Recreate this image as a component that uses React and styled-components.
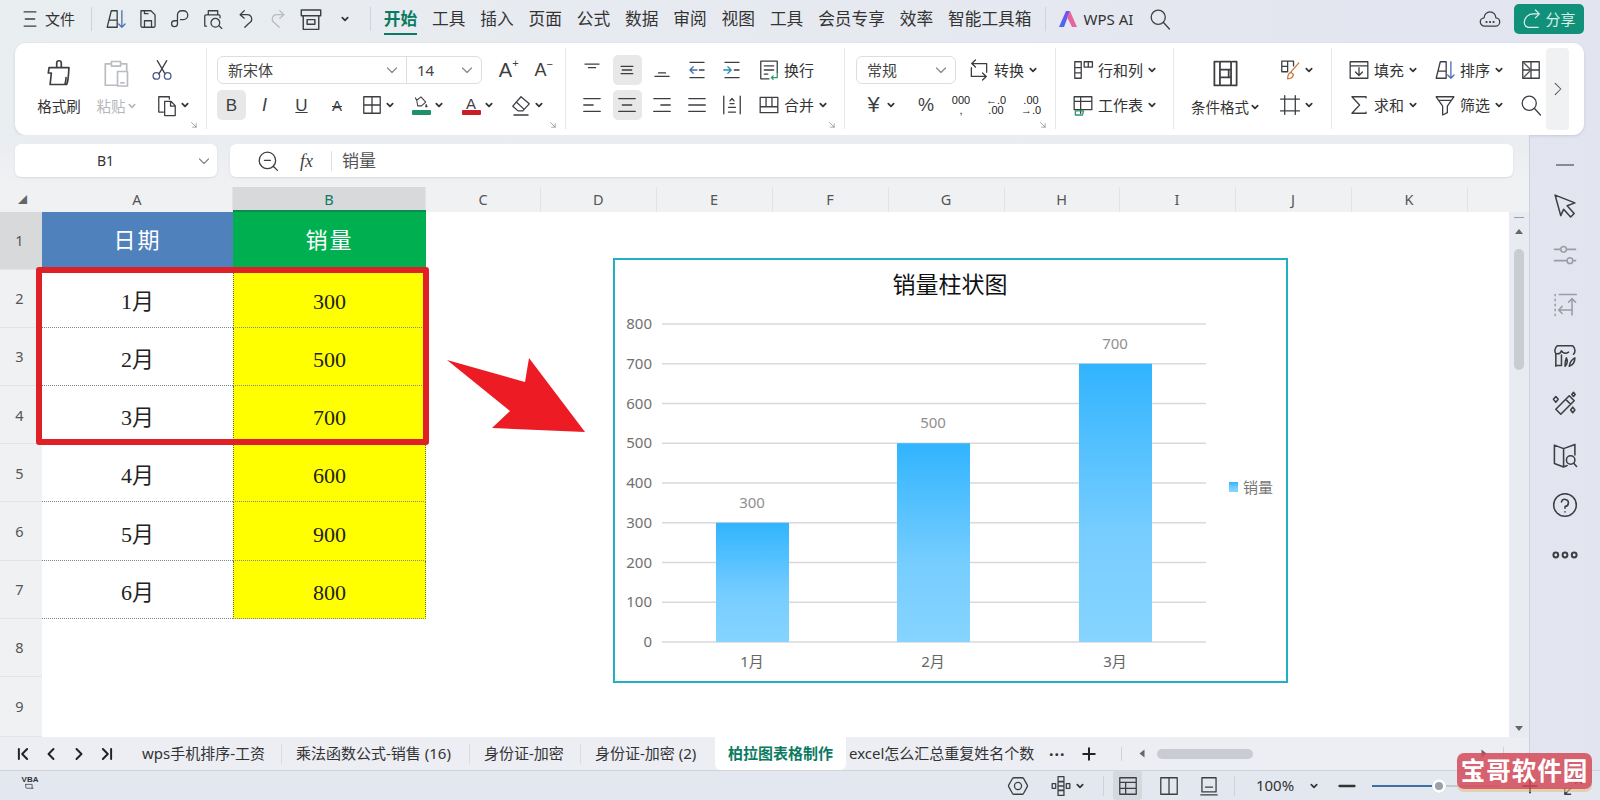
import React from 'react';
import styled, { createGlobalStyle } from 'styled-components';

const UI = '"Noto Sans", "Noto Sans CJK SC", sans-serif';
const SERIF = '"Liberation Serif", "Noto Sans CJK SC", serif';

const Global = createGlobalStyle`
	html, body { margin: 0; padding: 0; background: #e6e9f0; }
	body { font-family: ${UI}; color: #333; }
	* { box-sizing: border-box; }
`;

// icon drawings, all on a 20x20 box
const P = ({ d, c, w }) => <path d={d} stroke={c} strokeWidth={w} />;
const icons = {
	menu: <P d="M5 4h10M6 10h8M5 16h10" />,
	sort: <><P d="M2.5 17 6 3h5v14H2.5ZM4.2 11H11" /><P d="M15 3v14M12.3 14.3 15 17l2.7-2.7" c="#4a6fb0" /></>,
	save: <P d="M4 3h8.5L16 6.5V16a1 1 0 0 1-1 1H5a1 1 0 0 1-1-1ZM7 17v-5.5h6V17M7 3v2.5h3" />,
	link: <P d="M9.5 10.5H12a3.7 3.7 0 0 0 0-7.5h-1.5a3.5 3.5 0 0 0-3.5 3.5V14a2.5 2.5 0 1 1-2.5-2.5H7" />,
	preview: <P d="M6 6.5V3h8v3.5M4.5 16H3V7.5a1 1 0 0 1 1-1h11a1 1 0 0 1 1 1V9M12 9.5a3.7 3.7 0 1 0 0 7.4 3.7 3.7 0 0 0 0-7.4ZM14.8 15.6l2.7 2.4" />,
	undo: <P d="M8.5 3 5 6.3l3.5 3M5 6.3h6a3.8 3.8 0 0 1 1.5 7.3L9 17" />,
	redo: <P d="M11.5 3 15 6.3l-3.5 3M15 6.3H9a3.8 3.8 0 0 0-1.5 7.3L11 17" />,
	box: <P d="M2.5 3h15v4.5h-15ZM4 7.5V18h12V7.5M7 10.5h6v3.5H7Z" />,
	brush: <P d="M8.5 6.5V3.5a1.5 1.5 0 0 1 3 0v3M4 6.5h12M3.5 6.5 3 10h2l-.8 7.5H15c.8-1 1.2-5 1.5-11M14 17c.3-1.5.6-2.5.6-4" />,
	paste: <P d="M6 4H3v14h7M14 4h3v5M7 2.5h6V5.5H7ZM11 9h6.5v9.5H11ZM13.2 16.5h2" />,
	scissors: <><path d="M7.3 13.5 14 2M12.7 13.5 6 2" /><circle cx="5.2" cy="15" r="2.8" stroke="#4c5a8c" /><circle cx="14.8" cy="15" r="2.8" stroke="#4c5a8c" /></>,
	copy: <P d="M12 5V3H3v13h4M8 7h5.5L17 10.5V19H8ZM13 7v4h4" />,
	borders: <P d="M3 3h14v14H3ZM10 3v14M3 10h14" />,
	bucket: <P d="M5.5 6 10 2.5l5 5.5-4.500 4H6.500ZM5.500 6 4 3.500M15.500 10.500l1 2.500-1.500 0Z" />,
	eraser: <P d="M3 11 10 3l7 6-5.5 6H7.5ZM6 7.5l6.5 6M4 18.5h12" />,
	launcher: <P d="M4 4l8 8M12 6v6H6" />,
	alignTop: <P d="M4 5h12M7 8h6" />,
	alignMid: <P d="M5 7h10M6 10h8M5 13h10" />,
	alignBot: <P d="M7 12.5h6M4 15.5h12" />,
	outdent: <><P d="M4 3.5h12M4 16.5h12M12 10h4" /><P d="M10 10H4M6.8 7.2 4 10l2.8 2.8" c="#4a6fb0" /></>,
	indent: <><P d="M4 3.5h12M4 16.5h12M12 10h4" /><P d="M3 10h6M6.5 7.2 9.3 10l-2.8 2.8" c="#2a8fb0" /></>,
	wrap: <><P d="M10 17.5H3v-15h14v10M6 6.5h8M6 10h8M6 13.5h3" /><P d="M17 13v3.5h-5M13.5 15l-1.5 1.5 1.5 1.5" c="#2a9a6a" /></>,
	alignL: <P d="M3 4.5h14M3 10h8M3 15.5h14" />,
	alignC: <P d="M3 4.5h14M6 10h8M3 15.5h14" />,
	alignR: <P d="M3 4.5h14M9 10h8M3 15.5h14" />,
	justify: <P d="M3 4.5h14M3 10h14M3 15.5h14" />,
	distrib: <P d="M3 2.5v15M17 2.5v15M7 16h6M7 12h6M8.3 6.5 10 4.5l1.700 2M8.3 8.8h3.4" />,
	merge: <P d="M2.5 3.5h15v13h-15ZM2.5 11.5h15M7.5 3.5v8M12.5 3.5v8" />,
	convert: <P d="M7 1.5 3.8 4.5 7 7.5M3.8 4.5H16.5V12M13 18.5l3.2-3-3.2-3M16.2 15.5H3.5V8" />,
	rowcol: <P d="M3 3h5.5v14H3ZM3 8h5.5M3 12.5h5.5M11 3h7v4.5h-7ZM14.5 3v4.5" />,
	sheet: <><P d="M2.5 3h15v11h-15ZM2.5 7h15M8 3v14" /><P d="M3.5 15h7l-1 3.5h-6Z" c="#2a9a6a" /></>,
	cond: <P d="M5.5 2.5H3v15h2.5M14.5 2.500H17v15h-2.5M6.500 2.500h7v15h-7ZM6.500 7.500h5.500v5H6.500ZM12 7.500h1.500M6.500 12.500h7" />,
	fmtbrush: <><P d="M3 2.5h10v4M3 2.5v9h4.5M8 2.5v9M3 7h5" /><P d="M17.5 4 10.5 12M8 17.5c0-3 1-5 3-5.500l2 2c-.5 2-2.500 3.500-5 3.500Z" c="#c8783c" /></>,
	freeze: <P d="M2 5h16M2 15h16M5.5 2v16M14.5 2v16" />,
	fill: <P d="M2.5 3h15v14h-15ZM2.5 6.5h15M10 8v6.5M7 11.7l3 3 3-3" />,
	sum: <P d="M16 4V3H4l6.5 7L4 17h12v-1" />,
	filter: <P d="M2.5 3h15l-5.5 8v5.5l-4 2V11ZM5 6h10" />,
	split: <><P d="M3 3h14M3 17h14M17 3v14M3 3v14M3 10h14M10 3v14" /><P d="M3 3l7 7-7 7" c="#555" /></>,
	search: <P d="M8.5 2.5a6 6 0 1 0 0 12 6 6 0 0 0 0-12ZM13 13l5 5.5" />,
	zoomFx: <P d="M9.5 2.5a7 7 0 1 0 0 14 7 7 0 0 0 0-14ZM7 9.5h5M14.5 14.5l3.5 3.5" />,
	cloud: <><P d="M5.5 16a3.5 3.5 0 0 1-.5-7 5 5 0 0 1 10 0 3.5 3.5 0 0 1-.5 7Z" /><P d="M7 12.5h.1M10 12.5h.1M13 12.5h.1" w="1.8" /></>,
	share: <P d="M13.5 1.500 17 5l-3.5 3.5M17 5h-5a8 8 0 0 0-8.500 7.500c0 3 1.500 4 3.500 4.500h9" />,
	cursor: <P d="M3 3l14 5.5-5.500 2 5 5.500-2.500 2.500-5-5.500L7 17.500Z" />,
	sliders: <P d="M2.5 6h4.5M11 6h6.500M7 6a2 2 0 1 0 4 0 2 2 0 0 0-4 0ZM2.500 14h9M15.500 14h2M11.500 14a2 2 0 1 0 4 0 2 2 0 0 0-4 0Z" />,
	arrange: <P d="M3 2.5v1M3 6v1M3 9.5v1M3 13v1M3 16.5v1M6 2.5h12M15 17V6M12.5 8 15 5.5 17.5 8M15 13.5H6M8 11 5.5 13.5 8 16" />,
	leaf: <P d="M3.5 18V9C2.5 8 2.5 5 4.5 3.5h11c2 1.5 2 5 .5 6M7.5 10v7.5H3.5M3.5 9c2 .5 3.5-.5 4-2 .5 1.500 3 2.500 5 1M10 18c0-3 .5-5 1-6 1 2 1 4-1 6ZM13 18c.5-3 2-5 4-6 0 3-1 5-4 6Z" />,
	wand: <P d="M3.5 13 13 3.5l3.5 3.5L7 16.5ZM10.5 6l3.5 3.5M3.5 4l1.700 2-1.700 2-1.700-2ZM15.500 11.500l1.500 2-1.500 2-1.500-2ZM16 1l1.200 1.500L16 4l-1.200-1.500Z" />,
	guide: <P d="M9 18.5 2.5 16V3L9 5.5 17 2.5V10M9 5.5v13M9 18.5l2.500-1M14 10.500a3 3 0 1 0 0 6 3 3 0 0 0 0-6ZM16.200 15.800l2 2.300" />,
	help: <P d="M10 2a8 8 0 1 0 0 16 8 8 0 0 0 0-16ZM7.5 7.8A2.5 2.5 0 1 1 10 11v1.300M10 14.800v.2" />,
	dots: <><circle cx="3.5" cy="10" r="1.7" /><circle cx="10" cy="10" r="1.7" /><circle cx="16.5" cy="10" r="1.7" /></>,
	dash: <P d="M2 10h16" />,
	first: <P d="M5 4v12M15 4 9 10l6 6" />,
	prev: <P d="M13 4 7 10l6 6" />,
	next: <P d="M7 4l6 6-6 6" />,
	last: <P d="M15 4v12M5 4l6 6-6 6" />,
	plus: <P d="M10 3v14M3 10h14" />,
	vba: <P d="M4 2v4c0 1 .7 1.500 1.500 1.500h9M4 2h9v5.500" />,
	eye: <><P d="M6.5 3h7c.6 0 1 .3 1.300.8l3 5.200c.3.5.3 1.200 0 1.700l-3 5.500c-.3.5-.7.8-1.300.8h-7c-.6 0-1-.3-1.300-.8l-3-5.500c-.3-.5-.3-1.200 0-1.700l3-5.200c.3-.5.7-.8 1.300-.8Z" /><circle cx="10" cy="10" r="3" /></>,
	pivot: <P d="M7.5 2h5v4h-5ZM7.5 14h5v4h-5ZM7.5 6.5h5v7h-5ZM2.5 8h3v4h-3ZM14.5 8h3v4h-3ZM7.5 10h5" />,
	viewNormal: <P d="M3 3h14v14H3ZM3 7h14M8 7v10M3 12h14" />,
	viewSplit: <P d="M3 3h14v14H3ZM10 3v14" />,
	viewPage: <P d="M4 3h12v12H4ZM3 17.500h14M7 11h6" />,
	full: <P d="M12 3h5v5M17 3l-5 5M8 17H3v-5M3 17l5-5" />,
};

const Svg = styled.svg`
	width: ${(p) => p.$s}px;
	height: ${(p) => p.$s}px;
	flex: none;
	fill: none;
	overflow: visible;
	stroke: ${(p) => p.$c || '#3c3e42'};
	stroke-width: ${(p) => p.$sw || 1.1};
	stroke-linecap: round;
	stroke-linejoin: round;
`;
const Ico = ({ n, s = 20, c, sw }) => (
	<Svg viewBox="1.5 1.5 17 17" $s={s} $c={c} $sw={sw}>
		{icons[n]}
	</Svg>
);
const ChevSvg = styled.svg`
	width: 8px;
	height: 8px;
	flex: none;
	fill: none;
	margin-left: ${(p) => p.$ml || 0}px;
	stroke: ${(p) => p.$c || '#333'};
	stroke-width: 1.7;
	stroke-linecap: round;
	stroke-linejoin: round;
`;
const Chev = ({ c, ml }) => (
	<ChevSvg viewBox="0 0 8 8" $c={c} $ml={ml}>
		<path d="M1.3 2.700 4 5.400l2.700-2.700" />
	</ChevSvg>
);
const ThinChevSvg = styled.svg`
	width: 14px;
	height: 14px;
	flex: none;
	fill: none;
	stroke: #888;
	stroke-width: 1.2;
	stroke-linecap: round;
	stroke-linejoin: round;
`;
const ThinChev = () => (
	<ThinChevSvg viewBox="0 0 14 14">
		<path d="M2.5 5 7 9.5 11.5 5" />
	</ThinChevSvg>
);

const Page = styled.div`
	width: 1600px;
	height: 800px;
	position: relative;
	overflow: hidden;
	display: flex;
	flex-direction: column;
	background: linear-gradient(90deg, #e9eef1 0%, #e6e9f0 55%, #e2e5f0 100%);
	font-family: ${UI};
	line-height: 1;
`;

/* top menu row */
const TopBar = styled.div`
	height: 43px;
	flex: none;
	display: flex;
	align-items: center;
	padding: 0 16px 5px 20px;
`;
const FileText = styled.span`
	font-size: 15px;
	margin-left: 5px;
	color: #333;
`;
const VLine = styled.div`
	width: 1px;
	height: ${(p) => p.$h || 24}px;
	flex: none;
	margin-left: ${(p) => p.$ml || 0}px;
	background: #cfd3d9;
`;
const QuickIcons = styled.div`
	display: flex;
	align-items: center;
	gap: 12.4px;
	margin-left: 14px;
`;
const MenuTabs = styled.div`
	display: flex;
	align-items: center;
	gap: 14.9px;
	margin-left: 13px;
`;
const MenuTab = styled.span`
	position: relative;
	font-size: 16.7px;
	color: ${(p) => (p.$on ? '#0c7a62' : '#333')};
	font-weight: ${(p) => (p.$on ? 700 : 400)};
	${(p) =>
		p.$on &&
		`&::after { content: ''; position: absolute; left: 0; right: 0; bottom: -8px; height: 2px; background: #0c7a62; }`}
`;
const WpsAi = styled.div`
	display: flex;
	align-items: center;
	gap: 6px;
	margin-left: 13px;
	font-size: 15px;
	color: #333;
`;
const LogoSvg = styled.svg`
	width: 18px;
	height: 16px;
	flex: none;
`;
const SearchSlot = styled.div`
	display: flex;
	margin-left: 17px;
`;
const ShareWrap = styled.div`
	margin-left: auto;
	display: flex;
	align-items: center;
	gap: 14px;
`;
const ShareBtn = styled.div`
	width: 70px;
	height: 30px;
	border-radius: 5px;
	background: #11907a;
	color: #d9f1ea;
	font-size: 15px;
	display: flex;
	align-items: center;
	justify-content: center;
	gap: 4px;
`;

/* ribbon */
const Ribbon = styled.div`
	height: 92px;
	flex: none;
	margin: 0 16px 0 15px;
	background: #fff;
	border-radius: 11px;
	box-shadow: 0 1px 3px rgba(90, 100, 120, 0.2);
	display: flex;
`;
const Group = styled.div`
	position: relative;
	width: ${(p) => p.$w}px;
	flex: none;
	padding: 12px 0 0 ${(p) => p.$pl || 0}px;
	display: ${(p) => (p.$row ? 'flex' : 'block')};
`;
const GroupLine = styled.div`
	position: absolute;
	right: 0;
	top: 5px;
	bottom: 6px;
	width: 1px;
	background: #e4e6e9;
`;
const Launcher = styled.div`
	position: absolute;
	right: 7px;
	bottom: 4px;
	display: flex;
`;
const Row = styled.div`
	display: flex;
	align-items: center;
	height: 30px;
	gap: ${(p) => p.$gap || 0}px;
	margin-bottom: 5px;
`;
const Tool = styled.div`
	width: ${(p) => p.$w || 29}px;
	height: 30px;
	flex: none;
	margin-left: ${(p) => p.$ml || 0}px;
	border-radius: 5px;
	display: flex;
	align-items: center;
	justify-content: center;
	gap: 4px;
	background: ${(p) => (p.$on ? '#e8e8e8' : 'transparent')};
`;
const LabelTool = styled.div`
	display: flex;
	align-items: center;
	height: 30px;
	flex: none;
	margin-left: ${(p) => p.$ml || 0}px;
	font-size: 15px;
	color: #333;
	gap: 5px;
`;
const BigTool = styled.div`
	width: ${(p) => p.$w}px;
	flex: none;
	margin-left: ${(p) => p.$ml || 0}px;
	padding-top: 5px;
	display: flex;
	flex-direction: column;
	align-items: center;
`;
const BigLabel = styled.div`
	margin-top: 13px;
	display: flex;
	align-items: center;
	gap: 2px;
	font-size: 14.5px;
	color: ${(p) => (p.$off ? '#b5b7ba' : '#333')};
`;
const SideCol = styled.div`
	margin-left: ${(p) => p.$ml || 0}px;
`;
const SelectBox = styled.div`
	width: ${(p) => p.$w}px;
	height: 28px;
	flex: none;
	border: 1px solid #dcdee1;
	border-radius: 6px;
	display: flex;
	align-items: center;
`;
const SelectPart = styled.div`
	flex: ${(p) => (p.$w ? 'none' : 1)};
	width: ${(p) => (p.$w ? `${p.$w}px` : 'auto')};
	height: 100%;
	display: flex;
	align-items: center;
	justify-content: space-between;
	padding: 0 7px 0 10px;
	font-size: 15px;
	color: #444;
	border-left: ${(p) => (p.$split ? '1px solid #dcdee1' : 'none')};
`;
const Glyph = styled.span`
	position: relative;
	font-family: "Liberation Sans", sans-serif;
	font-size: ${(p) => p.$size || 17}px;
	font-weight: ${(p) => p.$weight || 400};
	font-style: ${(p) => (p.$italic ? 'italic' : 'normal')};
	text-decoration: ${(p) => p.$deco || 'none'};
	color: #3c3e42;
`;
const Sup = styled.span`
	position: absolute;
	left: 100%;
	top: -2px;
	font-size: 11px;
`;
const ColorGlyph = styled.div`
	display: flex;
	flex-direction: column;
	align-items: center;
	width: 20px;
`;
const ColorBar = styled.div`
	width: 19px;
	height: 5px;
	margin-top: -2px;
	border-radius: 1px;
	background: ${(p) => p.$c};
`;
const FontA = styled.span`
	font-family: "Liberation Sans", sans-serif;
	font-size: 15px;
	height: 16px;
	color: #3c3e42;
`;
const NumStack = styled.div`
	display: flex;
	flex-direction: column;
	align-items: center;
	font-family: "Liberation Sans", sans-serif;
	font-size: 11px;
	line-height: 10px;
	color: #222;
`;
const RibbonMore = styled.div`
	width: 23px;
	height: 82px;
	flex: none;
	margin-top: 5px;
	border-radius: 4px;
	background: #f0f1f2;
	display: flex;
	align-items: center;
	justify-content: center;
`;

/* everything under the ribbon */
const Body = styled.div`
	flex: 1;
	min-height: 0;
	display: flex;
`;
const LeftCol = styled.div`
	width: 1529px;
	flex: none;
	display: flex;
	flex-direction: column;
	padding-top: 9px;
	background: linear-gradient(180deg, #e9ecf0 0px, #f0f1f3 50px);
`;
const FormulaRow = styled.div`
	height: 33px;
	flex: none;
	display: flex;
	gap: 13px;
	padding-left: 15px;
	margin-bottom: 10px;
`;
const NameBox = styled.div`
	width: 202px;
	flex: none;
	background: #fff;
	border-radius: 6px;
	box-shadow: 0 1px 2px rgba(90, 100, 120, 0.15);
	display: flex;
	align-items: center;
	justify-content: space-between;
	padding: 0 6px 0 82px;
	font-size: 14px;
	color: #333;
`;
const FormulaBox = styled.div`
	width: 1283px;
	flex: none;
	background: #fff;
	border-radius: 6px;
	box-shadow: 0 1px 2px rgba(90, 100, 120, 0.15);
	display: flex;
	align-items: center;
	padding-left: 28px;
	font-size: 17px;
	color: #555;
`;
const Fx = styled.span`
	margin-left: 22px;
	font-family: "Liberation Serif", serif;
	font-style: italic;
	font-size: 18px;
	color: #444;
`;
const FormulaSep = styled.div`
	width: 1px;
	height: 20px;
	margin: 0 10px 0 18px;
	background: #dfe1e4;
`;
const ColHeads = styled.div`
	height: 25px;
	flex: none;
	display: flex;
	background: #f0f1f3;
`;
const Corner = styled.div`
	width: 42px;
	flex: none;
	display: flex;
	align-items: center;
	padding-left: 18px;
	color: #666;
	font-size: 9px;
`;
const ColHead = styled.div`
	width: ${(p) => p.$w}px;
	flex: none;
	display: flex;
	align-items: center;
	justify-content: center;
	font-size: 14.5px;
	color: ${(p) => (p.$on ? '#0c7a62' : '#555')};
	background: ${(p) => (p.$on ? '#d8d9db' : 'transparent')};
	border-right: 1px solid #e1e3e6;
`;
const SheetRow = styled.div`
	flex: 1;
	min-height: 0;
	display: flex;
`;
const RowHeads = styled.div`
	width: 42px;
	flex: none;
`;
const RowHead = styled.div`
	height: ${(p) => (p.$last ? 60 : 58.1)}px;
	display: flex;
	align-items: center;
	justify-content: center;
	padding-right: 3px;
	font-size: 14.5px;
	color: #555;
	background: ${(p) => (p.$on ? '#d8d9db' : '#f0f1f3')};
	border-bottom: 1px solid #e2e4e7;
`;
const Canvas = styled.div`
	position: relative;
	width: 1467px;
	flex: none;
	background: #fff;
`;
const DataGrid = styled.div`
	display: grid;
	grid-template-columns: 191px 193px;
	grid-auto-rows: 58.1px;
	width: 384px;
`;
const Cell = styled.div`
	display: flex;
	align-items: center;
	justify-content: center;
	padding-top: 7px;
	font-family: ${SERIF};
	font-size: 22px;
	color: #222;
	background: ${(p) => p.$bg || '#fff'};
	border-bottom: 1px dotted #808490;
	border-right: ${(p) => (p.$b ? '1px dotted #6b6b40' : 'none')};
	border-left: ${(p) => (p.$b ? '1px dotted #6b6b40' : 'none')};
`;
const HeadCell = styled.div`
	display: flex;
	align-items: center;
	justify-content: center;
	font-family: ${SERIF};
	font-size: 22px;
	letter-spacing: 2px;
	color: #fff;
	background: ${(p) => p.$bg};
	${(p) => p.$sel && 'box-shadow: 0 -2px 0 #0d8a4e;'}
`;
const Highlight = styled.div`
	position: absolute;
	left: -6px;
	top: 55px;
	width: 393px;
	height: 178px;
	border: 6px solid #df2127;
	border-radius: 3px;
`;
const ArrowSvg = styled.svg`
	position: absolute;
	left: 403px;
	top: 146px;
	width: 142px;
	height: 76px;
`;
const ChartFrame = styled.div`
	position: absolute;
	left: 571px;
	top: 46px;
	width: 675px;
	height: 425px;
	background: #fff;
	border: 2px solid #22aec6;
`;
const ChartSvg = styled.svg`
	display: block;
	width: 100%;
	height: 100%;
	text {
		font-family: ${UI};
	}
`;
const VScroll = styled.div`
	width: 20px;
	flex: none;
	background: #e8ebf1;
	display: flex;
	flex-direction: column;
	align-items: center;
	padding: 5px 0 6px;
`;
const ScrollDash = styled.div`
	width: 10px;
	height: 1px;
	background: #9a9da2;
	margin-bottom: 11px;
`;
const TriUp = styled.div`
	width: 0;
	height: 0;
	border: 4px solid transparent;
	border-top: 0;
	border-bottom: 5px solid #666;
`;
const TriDown = styled(TriUp)`
	transform: rotate(180deg);
	margin-top: auto;
`;
const Thumb = styled.div`
	width: 10px;
	height: 121px;
	margin-top: 15px;
	border-radius: 5px;
	background: #c9cdd3;
`;

/* sheet tabs */
const TabBar = styled.div`
	height: 33px;
	flex: none;
	display: flex;
	align-items: center;
	background: #eceef3;
	font-size: 15px;
`;
const TabNav = styled.div`
	display: flex;
	align-items: center;
	gap: 14px;
	padding-left: 16px;
	margin-right: 14px;
`;
const Tab = styled.div`
	width: ${(p) => p.$w}px;
	height: 100%;
	flex: none;
	display: flex;
	align-items: center;
	justify-content: ${(p) => (p.$on ? 'center' : 'flex-start')};
	padding-left: ${(p) => (p.$on ? 0 : p.$pl ?? 14)}px;
	overflow: hidden;
	white-space: nowrap;
	color: ${(p) => (p.$on ? '#0c7a62' : '#333')};
	font-weight: ${(p) => (p.$on ? 700 : 400)};
	background: ${(p) => (p.$on ? '#fff' : 'transparent')};
	border-radius: ${(p) => (p.$on ? '0 0 6px 6px' : 0)};
`;
const TabSep = styled.div`
	width: 1px;
	height: 20px;
	flex: none;
	background: #d9dce1;
`;
const TabTool = styled.div`
	display: flex;
	flex: none;
	margin-left: ${(p) => p.$ml}px;
	font-size: 16px;
	font-weight: 700;
	color: #333;
	letter-spacing: 1px;
`;
const TriLeft = styled(TriUp)`
	transform: rotate(-90deg);
	margin-left: ${(p) => p.$ml}px;
	flex: none;
`;
const TriRight = styled(TriUp)`
	transform: rotate(90deg);
	margin-left: ${(p) => p.$ml}px;
	flex: none;
`;
const HThumb = styled.div`
	width: 96px;
	height: 10px;
	flex: none;
	margin-left: 11px;
	border-radius: 5px;
	background: #c9cdd3;
`;

/* right rail */
const Rail = styled.div`
	flex: 1;
	border-left: 1px solid #ccd1da;
	display: flex;
	flex-direction: column;
	align-items: center;
	gap: 26px;
	padding: 20px 0 0;
`;
const RailDash = styled.div`
	width: 18px;
	height: 2px;
	margin: 9px 0 1px;
	background: #888b92;
`;

/* status bar */
const StatusBar = styled.div`
	height: 30px;
	flex: none;
	display: flex;
	align-items: center;
	padding: 0 17px 0 21px;
	background: #e3e7ef;
	border-top: 1px solid #cfd3da;
`;
const VbaMark = styled.div`
	display: flex;
	flex-direction: column;
	align-items: center;
	width: 18px;
	font-family: "Liberation Sans", sans-serif;
	font-size: 8px;
	font-weight: 700;
	color: #333;
`;
const StatusSpacer = styled.div`
	flex: 1;
`;
const StatusItem = styled.div`
	width: ${(p) => p.$w || 20}px;
	height: ${(p) => (p.$on ? '100%' : 'auto')};
	flex: none;
	margin-left: ${(p) => p.$ml || 0}px;
	display: flex;
	align-items: center;
	justify-content: center;
	font-size: 15px;
	color: #333;
	background: ${(p) => (p.$on ? '#d5d8de' : 'transparent')};
	border-radius: ${(p) => (p.$on ? '3px' : 0)};
`;
const Zoomer = styled.div`
	position: relative;
	width: 128px;
	height: 2px;
	flex: none;
	margin-left: 15px;
	background: linear-gradient(90deg, #3f6ea8 0 66px, #c5c8ce 66px);
`;
const Knob = styled.div`
	position: absolute;
	left: 60px;
	top: -6px;
	width: 14px;
	height: 14px;
	border-radius: 50%;
	background: #fff;
	box-shadow: inset 0 0 0 3px #fff, inset 0 0 0 7px #9aa0a8;
`;
const Watermark = styled.div`
	position: absolute;
	left: 1457px;
	top: 753px;
	width: 135px;
	height: 36px;
	border-radius: 7px;
	background: rgba(212, 74, 90, 0.86);
	box-shadow: 0 3px 0 rgba(226, 190, 120, 0.55);
	display: flex;
	align-items: center;
	justify-content: center;
	color: #fff;
	font-size: 24.5px;
	font-weight: 700;
	letter-spacing: 1px;
`;

const menuTabs = ['开始', '工具', '插入', '页面', '公式', '数据', '审阅', '视图', '工具', '会员专享', '效率', '智能工具箱'];
const colHeads = [
	['A', 191], ['B', 193], ['C', 115], ['D', 115.5], ['E', 116], ['F', 116], ['G', 116], ['H', 115], ['I', 116], ['J', 116], ['K', 116], ['', 62],
];
const tableRows = [
	['1月', 300], ['2月', 500], ['3月', 700], ['4月', 600], ['5月', 900], ['6月', 800],
];
const rowNums = [1, 2, 3, 4, 5, 6, 7, 8, 9];

// chart, drawn in the frame's own pixels
const chartBars = [
	{ label: '1月', value: 300, x: 103 },
	{ label: '2月', value: 500, x: 284 },
	{ label: '3月', value: 700, x: 466 },
];
const ticks = [0, 100, 200, 300, 400, 500, 600, 700, 800];
const yOf = (v) => 384 - v * 0.3975;

function BarChart() {
	return (
		<ChartSvg viewBox="2 2 671 421">
			<defs>
				<linearGradient id="barFill" x1="0" y1="0" x2="0" y2="1">
					<stop offset="0" stopColor="#31b4fe" />
					<stop offset="0.6" stopColor="#76cdff" />
					<stop offset="1" stopColor="#86d4ff" />
				</linearGradient>
			</defs>
			<text x="337" y="35" textAnchor="middle" fontSize="23" fill="#111">销量柱状图</text>
			{ticks.map((t) => (
				<g key={t}>
					<line x1="49" x2="593" y1={yOf(t)} y2={yOf(t)} stroke="#d9d9dc" strokeWidth="1.5" />
					<text x="39" y={yOf(t) + 5} textAnchor="end" fontSize="15" fill="#707070">{t}</text>
				</g>
			))}
			{chartBars.map((b) => (
				<g key={b.label}>
					<rect x={b.x} y={yOf(b.value)} width="73" height={384 - yOf(b.value)} fill="url(#barFill)" />
					<text x={b.x + 36} y={yOf(b.value) - 15} textAnchor="middle" fontSize="15" fill="#8f8f8f">{b.value}</text>
					<text x={b.x + 36} y="409" textAnchor="middle" fontSize="15" fill="#666">{b.label}</text>
				</g>
			))}
			<rect x="616" y="224" width="9" height="10" fill="url(#barFill)" />
			<text x="630" y="235" fontSize="15" fill="#777">销量</text>
		</ChartSvg>
	);
}

const LaunchMark = () => (
	<Launcher>
		<Ico n="launcher" s={10} c="#777" />
	</Launcher>
);

export default function App() {
	return (
		<Page>
			<Global />
			<TopBar>
				<Ico n="menu" />
				<FileText>文件</FileText>
				<VLine $ml={16} />
				<QuickIcons>
					<Ico n="sort" />
					<Ico n="save" />
					<Ico n="link" />
					<Ico n="preview" />
					<Ico n="undo" />
					<Ico n="redo" c="#b8bbc0" />
					<Ico n="box" s={22} />
					<Chev ml={6} />
				</QuickIcons>
				<VLine $ml={21} />
				<MenuTabs>
					{menuTabs.map((t, i) => (
						<MenuTab key={i} $on={i === 0}>{t}</MenuTab>
					))}
				</MenuTabs>
				<VLine $ml={14} />
				<WpsAi>
					<LogoSvg viewBox="0 0 18 16">
						<defs>
							<linearGradient id="wpsLogo" x1="0" y1="1" x2="1" y2="0">
								<stop offset="0" stopColor="#3f6cf0" />
								<stop offset="1" stopColor="#7a4ff0" />
							</linearGradient>
						</defs>
						<polygon points="0,16 7,0 11,0 5,16" fill="url(#wpsLogo)" />
						<polygon points="8,6 11,0 18,16 13,16" fill="#e8659c" />
					</LogoSvg>
					WPS AI
				</WpsAi>
				<SearchSlot>
					<Ico n="search" />
				</SearchSlot>
				<ShareWrap>
					<Ico n="cloud" />
					<ShareBtn>
						<Ico n="share" c="#d9f1ea" s={19} />
						分享
					</ShareBtn>
				</ShareWrap>
			</TopBar>

			<Ribbon>
				<Group $w={192} $row $pl={14}>
					<BigTool $w={60}>
						<Ico n="brush" s={26} />
						<BigLabel>格式刷</BigLabel>
					</BigTool>
					<BigTool $w={54}>
						<Ico n="paste" s={26} c="#b9bcc0" />
						<BigLabel $off>粘贴<Chev c="#b5b7ba" /></BigLabel>
					</BigTool>
					<SideCol $ml={8}>
						<Row>
							<Tool $w={22}><Ico n="scissors" /></Tool>
						</Row>
						<Row>
							<Tool $w={44}><Ico n="copy" /><Chev /></Tool>
						</Row>
					</SideCol>
					<GroupLine />
					<LaunchMark />
				</Group>

				<Group $w={359} $pl={10}>
					<Row>
						<SelectBox $w={265}>
							<SelectPart>新宋体<ThinChev /></SelectPart>
							<SelectPart $w={75} $split>14<ThinChev /></SelectPart>
						</SelectBox>
						<Tool $w={35} $ml={6}><Glyph $size={20}>A<Sup>+</Sup></Glyph></Tool>
						<Tool $w={35}><Glyph $size={18}>A<Sup>−</Sup></Glyph></Tool>
					</Row>
					<Row>
						<Tool $w={29} $on><Glyph $size={17}>B</Glyph></Tool>
						<Tool $w={37}><Glyph $size={18} $italic>I</Glyph></Tool>
						<Tool $w={37}><Glyph $size={17} $deco="underline">U</Glyph></Tool>
						<Tool $w={34}><Glyph $size={15} $deco="line-through">A</Glyph></Tool>
						<Tool $w={48}><Ico n="borders" /><Chev /></Tool>
						<Tool $w={50}>
							<ColorGlyph><Ico n="bucket" s={16} /><ColorBar $c="#1e9266" /></ColorGlyph>
							<Chev />
						</Tool>
						<Tool $w={50}>
							<ColorGlyph><FontA>A</FontA><ColorBar $c="#cc1c24" /></ColorGlyph>
							<Chev />
						</Tool>
						<Tool $w={50}><Ico n="eraser" /><Chev /></Tool>
					</Row>
					<GroupLine />
					<LaunchMark />
				</Group>

				<Group $w={279} $pl={11.5}>
					<Row $gap={6}>
						<Tool><Ico n="alignTop" /></Tool>
						<Tool $on><Ico n="alignMid" /></Tool>
						<Tool><Ico n="alignBot" /></Tool>
						<Tool><Ico n="outdent" /></Tool>
						<Tool><Ico n="indent" /></Tool>
						<LabelTool $ml={6.5}><Ico n="wrap" />换行</LabelTool>
					</Row>
					<Row $gap={6}>
						<Tool><Ico n="alignL" /></Tool>
						<Tool $on><Ico n="alignC" /></Tool>
						<Tool><Ico n="alignR" /></Tool>
						<Tool><Ico n="justify" /></Tool>
						<Tool><Ico n="distrib" /></Tool>
						<LabelTool $ml={6.5}><Ico n="merge" />合并<Chev /></LabelTool>
					</Row>
					<GroupLine />
					<LaunchMark />
				</Group>

				<Group $w={211} $pl={11}>
					<Row>
						<SelectBox $w={100}>
							<SelectPart>常规<ThinChev /></SelectPart>
						</SelectBox>
						<LabelTool $ml={13}><Ico n="convert" />转换<Chev /></LabelTool>
					</Row>
					<Row $gap={5}>
						<Tool $w={50}><Glyph $size={22}>¥</Glyph><Chev ml={3} /></Tool>
						<Tool $w={30}><Glyph $size={18}>%</Glyph></Tool>
						<Tool $w={30}><NumStack>000<span>,</span></NumStack></Tool>
						<Tool $w={30}><NumStack>←.0<span>.00</span></NumStack></Tool>
						<Tool $w={30}><NumStack>.00<span>→.0</span></NumStack></Tool>
					</Row>
					<GroupLine />
					<LaunchMark />
				</Group>

				<Group $w={118} $pl={17}>
					<Row><LabelTool><Ico n="rowcol" />行和列<Chev /></LabelTool></Row>
					<Row><LabelTool><Ico n="sheet" />工作表<Chev /></LabelTool></Row>
					<GroupLine />
				</Group>

				<Group $w={158} $row $pl={11}>
					<BigTool $w={80}>
						<Ico n="cond" s={27} />
						<BigLabel>条件格式<Chev /></BigLabel>
					</BigTool>
					<SideCol $ml={15}>
						<Row><LabelTool><Ico n="fmtbrush" /><Chev /></LabelTool></Row>
						<Row><LabelTool><Ico n="freeze" /><Chev /></LabelTool></Row>
					</SideCol>
					<GroupLine />
				</Group>

				<Group $w={214} $pl={17}>
					<Row $gap={18}>
						<LabelTool><Ico n="fill" />填充<Chev /></LabelTool>
						<LabelTool><Ico n="sort" />排序<Chev /></LabelTool>
						<Ico n="split" />
					</Row>
					<Row $gap={18}>
						<LabelTool><Ico n="sum" />求和<Chev /></LabelTool>
						<LabelTool><Ico n="filter" />筛选<Chev /></LabelTool>
						<Ico n="search" />
					</Row>
				</Group>

				<RibbonMore>
					<Ico n="next" s={16} c="#555" />
				</RibbonMore>
			</Ribbon>

			<Body>
				<LeftCol>
					<FormulaRow>
						<NameBox>
							B1
							<ThinChev />
						</NameBox>
						<FormulaBox>
							<Ico n="zoomFx" />
							<Fx>fx</Fx>
							<FormulaSep />
							销量
						</FormulaBox>
					</FormulaRow>

					<ColHeads>
						<Corner>◢</Corner>
						{colHeads.map(([name, w], i) => (
							<ColHead key={i} $w={w} $on={name === 'B'}>{name}</ColHead>
						))}
					</ColHeads>

					<SheetRow>
						<RowHeads>
							{rowNums.map((n) => (
								<RowHead key={n} $on={n === 1} $last={n === 9}>{n}</RowHead>
							))}
						</RowHeads>
						<Canvas>
							<DataGrid>
								<HeadCell $bg="#4f81bd">日期</HeadCell>
								<HeadCell $bg="#00b050" $sel>销量</HeadCell>
								{tableRows.map(([month, sales]) => (
									<React.Fragment key={month}>
										<Cell>{month}</Cell>
										<Cell $b $bg="#ffff00">{sales}</Cell>
									</React.Fragment>
								))}
							</DataGrid>
							<Highlight />
							<ArrowSvg viewBox="0 0 142 76">
								<polygon points="2,2 80,24 84,0 140,74 47,70 65,53" fill="#ed1c24" strokeLinejoin="round" />
							</ArrowSvg>
							<ChartFrame>
								<BarChart />
							</ChartFrame>
						</Canvas>
						<VScroll>
							<ScrollDash />
							<TriUp />
							<Thumb />
							<TriDown />
						</VScroll>
					</SheetRow>

					<TabBar>
						<TabNav>
							<Ico n="first" s={14} c="#222" sw={2.4} />
							<Ico n="prev" s={14} c="#222" sw={2.4} />
							<Ico n="next" s={14} c="#222" sw={2.4} />
							<Ico n="last" s={14} c="#222" sw={2.4} />
						</TabNav>
						<Tab $w={153}>wps手机排序-工资</Tab>
						<TabSep />
						<Tab $w={187}>乘法函数公式-销售 (16)</Tab>
						<TabSep />
						<Tab $w={110}>身份证-加密</Tab>
						<TabSep />
						<Tab $w={134}>身份证-加密 (2)</Tab>
						<Tab $w={131} $on>柏拉图表格制作</Tab>
						<Tab $w={190} $pl={3}>excel怎么汇总重复姓名个数</Tab>
						<TabTool $ml={13}>···</TabTool>
						<TabTool $ml={16}><Ico n="plus" s={14} c="#222" sw={2.4} /></TabTool>
						<VLine $ml={25} $h={14} />
						<TriLeft $ml={16} />
						<HThumb />
						<TriRight $ml={227} />
						<VLine $ml={15} $h={14} />
					</TabBar>
				</LeftCol>

				<Rail>
					<RailDash />
					<Ico n="cursor" s={24} />
					<Ico n="sliders" s={24} c="#9a9da3" />
					<Ico n="arrange" s={24} c="#9a9da3" />
					<Ico n="leaf" s={24} />
					<Ico n="wand" s={24} />
					<Ico n="guide" s={24} />
					<Ico n="help" s={24} />
					<Ico n="dots" s={24} sw={1.4} />
				</Rail>
			</Body>

			<StatusBar>
				<VbaMark>
					VBA
					<Ico n="vba" s={12} />
				</VbaMark>
				<StatusSpacer />
				<StatusItem><Ico n="eye" /></StatusItem>
				<StatusItem $ml={23}><Ico n="pivot" /></StatusItem>
				<StatusItem $w={8} $ml={5}><Chev /></StatusItem>
				<VLine $ml={19} $h={20} />
				<StatusItem $w={29} $ml={9} $on><Ico n="viewNormal" /></StatusItem>
				<StatusItem $w={30} $ml={12}><Ico n="viewSplit" /></StatusItem>
				<StatusItem $w={30} $ml={10}><Ico n="viewPage" /></StatusItem>
				<VLine $ml={10} $h={20} />
				<StatusItem $w={40} $ml={20}>100%</StatusItem>
				<StatusItem $w={8} $ml={15}><Chev /></StatusItem>
				<StatusItem $ml={19}><Ico n="dash" sw={2.4} c="#333" s={16} /></StatusItem>
				<Zoomer><Knob /></Zoomer>
				<StatusItem $ml={20}><Ico n="plus" sw={2} c="#333" s={16} /></StatusItem>
				<StatusItem $ml={23}><Ico n="full" /></StatusItem>
			</StatusBar>

			<Watermark>宝哥软件园</Watermark>
		</Page>
	);
}
